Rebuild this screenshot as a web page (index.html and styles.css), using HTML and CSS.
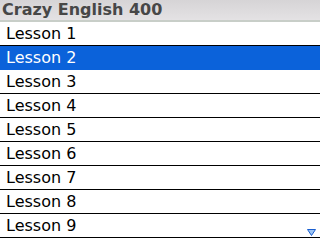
FILE: index.html
```html
<!DOCTYPE html>
<html lang="en">
<head>
  <meta charset="UTF-8" />
  <title>Crazy English 400</title>
  <link rel="stylesheet" href="styles.css">
</head>
<body>
  <div class="screen">
    <div class="title">Crazy English 400</div>
    <ul class="lessons">
      <li>Lesson 1</li>
      <li class="selected">Lesson 2</li>
      <li>Lesson 3</li>
      <li>Lesson 4</li>
      <li>Lesson 5</li>
      <li>Lesson 6</li>
      <li>Lesson 7</li>
      <li>Lesson 8</li>
      <li>Lesson 9</li>
    </ul>
    <!-- more items below -->
    <svg class="more" width="9" height="7" viewBox="0 0 9 7">
      <path d="M0.5 0.5 H8.5 L4.5 6.5 Z" fill="#9cc4f4" stroke="#1a5fd0" stroke-width="1"/>
    </svg>
  </div>
</body>
</html>
```

FILE: styles.css
```css
body {
  margin: 0;
  background: white;
  font-family: "DejaVu Sans", sans-serif;
}
.screen {
  width: 320px;
  height: 240px;
  position: relative;
  overflow: hidden;
}
.title {
  height: 20px;
  line-height: 19px;
  padding-left: 2px;
  font-size: 16px;
  font-weight: bold;
  color: #474747;
  background: linear-gradient(#d6d4d6, #e4e2e4);
  border-bottom: 2px solid #c8cec8;
}
.lessons {
  list-style: none;
  margin: 0;
  padding: 0;
}
.lessons li {
  height: 23px;
  line-height: 24px;
  padding-left: 6px;
  font-size: 16px;
  color: black;
  border-bottom: 1px solid black;
}
.lessons li.selected {
  background: #0b62da;
  color: white;
  border-bottom-color: #0b62da;
}
.more {
  position: absolute;
  right: 4px;
  bottom: 4px;
}
```
